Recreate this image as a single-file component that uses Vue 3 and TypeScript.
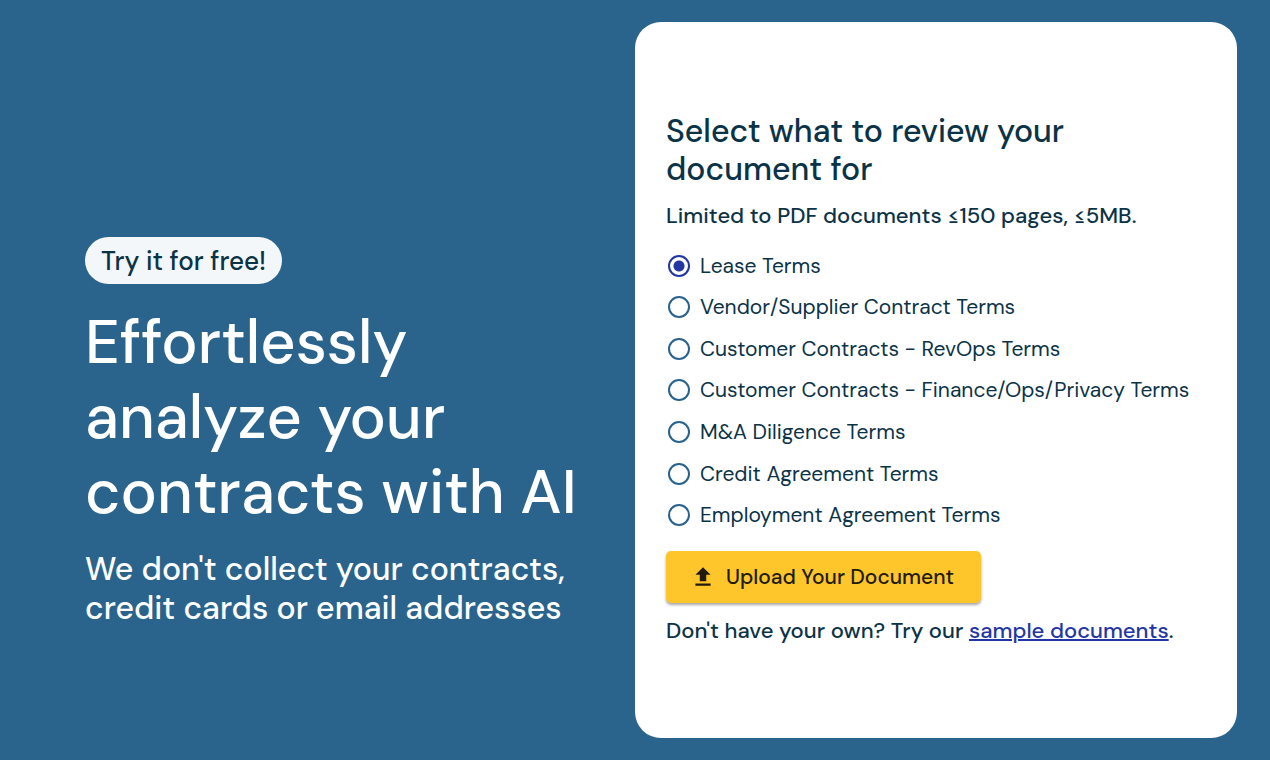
<script setup lang="ts">
import { ref } from 'vue'

const options: string[] = [
  'Lease Terms',
  'Vendor/Supplier Contract Terms',
  'Customer Contracts - RevOps Terms',
  'Customer Contracts - Finance/Ops/Privacy Terms',
  'M&A Diligence Terms',
  'Credit Agreement Terms',
  'Employment Agreement Terms',
]
const selected = ref(options[0])
</script>

<template>
  <main class="page">
    <section class="intro">
      <span class="badge">Try it for free!</span>
      <h1>Effortlessly<br />analyze your<br />contracts with AI</h1>
      <p class="lead">We don't collect your contracts,<br />credit cards or email addresses</p>
    </section>
    <form class="card" @submit.prevent>
      <h2>Select what to review your<br />document for</h2>
      <p class="note">Limited to PDF documents ≤150 pages, ≤5MB.</p>
      <div class="options" role="radiogroup" aria-label="Review type">
        <label v-for="option in options" :key="option" class="option">
          <input v-model="selected" type="radio" name="review" :value="option" />
          <span>{{ option }}</span>
        </label>
      </div>
      <button class="upload" type="button">
        <svg viewBox="0 0 24 24" width="26" height="26" aria-hidden="true">
          <path d="M5 20h14v-2H5v2zm0-10h4v6h6v-6h4l-7-7-7 7z" fill="currentColor" />
        </svg>
        <span>Upload Your Document</span>
      </button>
      <p class="sample">Don't have your own? Try our <a href="#">sample documents</a>.</p>
    </form>
  </main>
</template>

<style>
body {
  margin: 0;
  background: #2a638c;
}
</style>

<style scoped>
.page {
  box-sizing: border-box;
  min-height: 100vh;
  padding: 22px 33px 22px 85px;
  display: grid;
  grid-template-columns: 550px minmax(0, 1fr);
  background: #2a638c;
  color: #fff;
  font-family: "DM Sans", Inter, "Open Sans", sans-serif;
  white-space: nowrap;
}
.intro {
  display: flex;
  flex-direction: column;
  align-items: flex-start;
  justify-content: center;
  padding-top: 104px;
}
.badge {
  height: 47px;
  line-height: 48px;
  padding: 0 16px;
  border-radius: 24px;
  background: #f3f7fa;
  color: #0b3347;
  font-size: 26px;
  font-weight: 500;
}
h1 {
  margin: 21px 0 20px;
  font-size: 61px;
  line-height: 75px;
  font-weight: 500;
}
.lead {
  margin: 0;
  font-size: 32px;
  line-height: 39px;
  font-weight: 500;
}
.card {
  display: flex;
  flex-direction: column;
  align-items: flex-start;
  justify-content: center;
  padding: 0 31px 3px;
  border-radius: 26px;
  background: #fff;
  color: #0b3347;
}
h2 {
  margin: 0;
  font-size: 32px;
  line-height: 38px;
  font-weight: 500;
}
.note,
.sample {
  margin: 0;
  font-size: 22px;
  line-height: 28px;
  font-weight: 500;
}
.note {
  margin-top: 14px;
}
.options {
  display: grid;
  grid-auto-rows: 1fr;
  min-height: 291px;
  margin: 15px 0;
}
.option {
  display: flex;
  align-items: center;
  gap: 10px;
  font-size: 21px;
}
input {
  appearance: none;
  box-sizing: border-box;
  width: 22px;
  height: 22px;
  margin: 0 0 0 2px;
  border: 2px solid #29638d;
  border-radius: 50%;
}
input:checked {
  border-color: #2236a4;
  background: radial-gradient(circle, #2236a4 5px, transparent 6px);
}
.upload {
  display: flex;
  align-items: center;
  gap: 10px;
  height: 52px;
  padding: 0 27px 0 24px;
  border: 0;
  border-radius: 5px;
  background: #ffc62b;
  color: #211b0d;
  font: inherit;
  font-size: 21px;
  font-weight: 500;
  box-shadow: 0 2px 3px rgba(0, 0, 0, 0.35);
}
.sample {
  margin-top: 14px;
}
a {
  color: #2236a4;
  text-decoration-thickness: 2px;
}
</style>
